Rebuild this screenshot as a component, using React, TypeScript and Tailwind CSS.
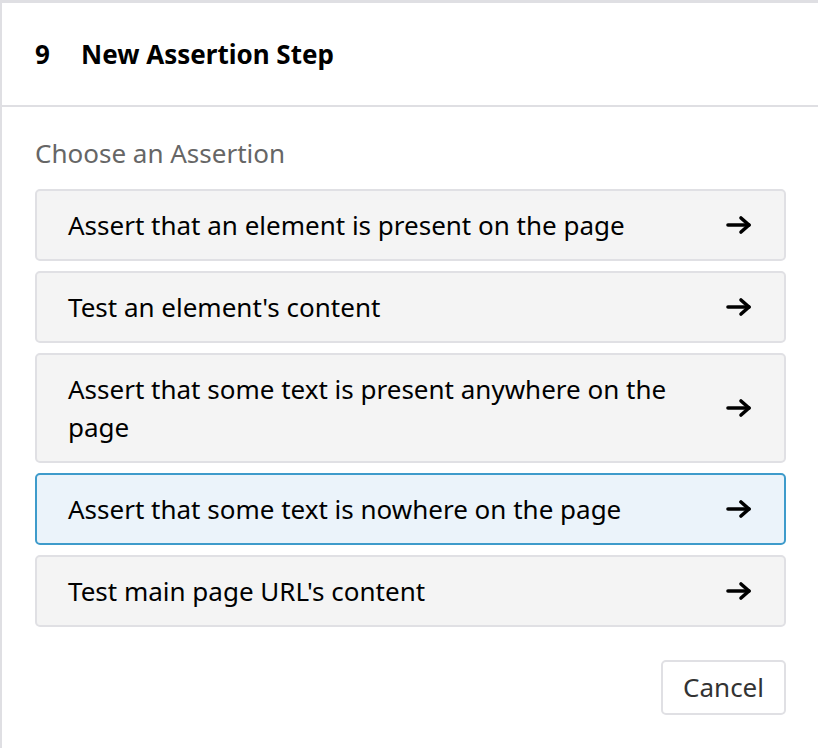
import React, { useState } from 'react';

const options = [
  'Assert that an element is present on the page',
  "Test an element's content",
  'Assert that some text is present anywhere on the page',
  'Assert that some text is nowhere on the page',
  "Test main page URL's content",
];

const Arrow = () => (
  <svg width="26" height="20" viewBox="0 0 26 20" fill="none" stroke="currentColor" strokeWidth="3.6" strokeLinecap="round" strokeLinejoin="round">
    <path d="M2 10h21" />
    <path d="M15 3l8 7-8 7" />
  </svg>
);

const App: React.FC = () => {
  const [active, setActive] = useState(3);

  return (
    <div className="w-[818px] h-[748px] bg-white border-t-[3px] border-l-2 border-[#dfdfe3] font-['Noto_Sans',sans-serif] text-black overflow-hidden">
      {/* Header */}
      <div className="h-[104px] flex items-center pl-[33px] border-b-2 border-[#dfdfe3] text-[26px] font-bold">
        <span className="w-[46px]">9</span>
        <span>New Assertion Step</span>
      </div>

      {/* Body */}
      <div className="pl-[33px] pr-[32px] pt-[30px]">
        <div className="text-[26px] text-[#666] leading-[32px] mb-[20px]">Choose an Assertion</div>
        <div className="flex flex-col gap-[10px]">
          {options.map((label, idx) => (
            <button
              key={idx}
              onClick={() => setActive(idx)}
              className={`flex items-center justify-between text-left rounded-[5px] border-2 pl-[31px] pr-[32px] py-[15px] text-[26px] leading-[38px] ${
                idx === active ? 'bg-[#ebf3fa] border-[#3e9bcb]' : 'bg-[#f4f4f4] border-[#e0e0e4]'
              }`}
            >
              <span className="max-w-[620px]">{label}</span>
              <Arrow />
            </button>
          ))}
        </div>
        <div className="flex justify-end mt-[33px]">
          <button className="h-[55px] px-[20px] rounded-[5px] border-2 border-[#e0e0e4] bg-white text-[26px] text-[#333]">
            Cancel
          </button>
        </div>
      </div>
    </div>
  );
};

export default App;
